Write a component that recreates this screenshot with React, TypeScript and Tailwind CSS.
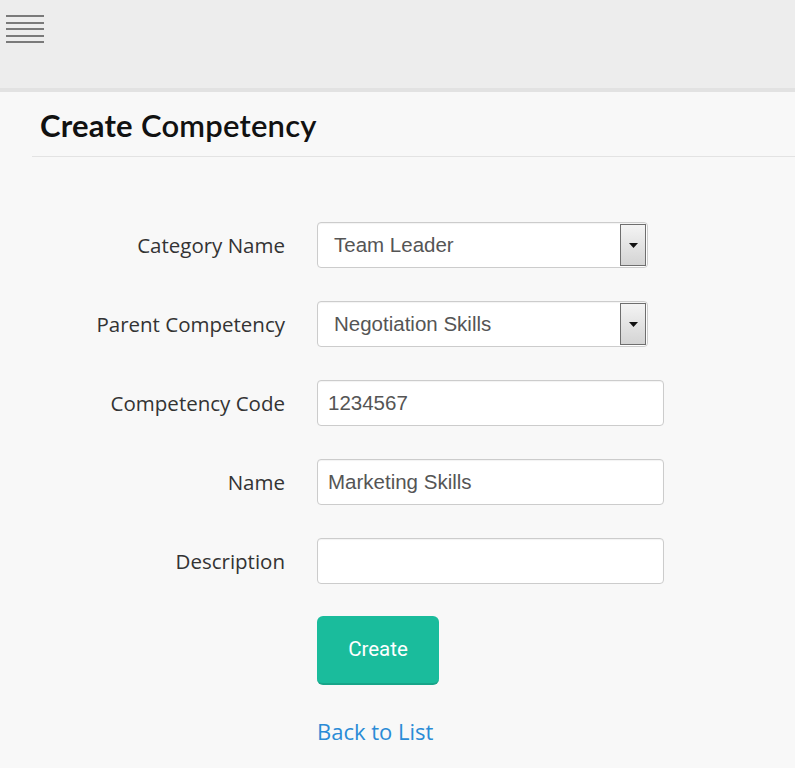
import React from "react";

function SelectField({ value }: { value: string }) {
  return (
    <div className="relative flex h-[46px] w-[331px] items-center rounded-[4px] border border-[#cccccc] bg-white pl-4 shadow-[inset_0_1px_1px_rgba(0,0,0,0.05)]">
      <span className="font-['Liberation_Sans',Arial,sans-serif] text-[20.5px] text-[#555555]">{value}</span>
      <div className="absolute right-[1px] top-[1px] bottom-[1px] flex w-[26px] items-center justify-center border border-[#6e6e6e] bg-gradient-to-b from-[#f4f4f4] to-[#d4d4d4]">
        <svg width="9" height="5" viewBox="0 0 9 5">
          <path d="M0 0 H9 L4.5 5 Z" fill="#111" />
        </svg>
      </div>
    </div>
  );
}

function TextField({ value }: { value: string }) {
  return (
    <div className="flex h-[46px] w-[347px] items-center rounded-[4px] border border-[#cccccc] bg-white pl-[10px] shadow-[inset_0_1px_1px_rgba(0,0,0,0.05)]">
      <span className="font-['Liberation_Sans',Arial,sans-serif] text-[20.5px] text-[#555555]">{value}</span>
    </div>
  );
}

function Row({ label, children }: { label: string; children: React.ReactNode }) {
  return (
    <div className="flex items-center">
      <label className="w-[285px] text-right font-['Open_Sans',sans-serif] text-[20.5px] text-[#333333]">
        {label}
      </label>
      <div className="ml-[32px]">{children}</div>
    </div>
  );
}

export default function App() {
  return (
    <div className="min-h-[768px] w-full bg-[#f8f8f8]">
      <header className="h-[92px] border-b-[4px] border-[#e2e2e2] bg-[#ededed] pl-[6px] pt-[15px]">
        <div className="flex w-[38px] flex-col gap-[4.5px]">
          {[0, 1, 2, 3, 4].map((i) => (
            <div key={i} className="h-[2px] bg-[#7a7a7a]" />
          ))}
        </div>
      </header>

      <div className="pl-[32px]">
        <div className="border-b border-[#e3e3e3] pb-[12px] pl-[8px] pt-[14px]">
          <h1 className="font-['Lato',sans-serif] text-[31px] leading-[38px] tracking-[0.2px] text-[#111111]">
            <span className="font-bold">Create</span> <span className="font-semibold">Competency</span>
          </h1>
        </div>
      </div>

      <div className="flex flex-col gap-[33px] pt-[65px]">
        <Row label="Category Name">
          <SelectField value="Team Leader" />
        </Row>
        <Row label="Parent Competency">
          <SelectField value="Negotiation Skills" />
        </Row>
        <Row label="Competency Code">
          <TextField value="1234567" />
        </Row>
        <Row label="Name">
          <TextField value="Marketing Skills" />
        </Row>
        <Row label="Description">
          <TextField value="" />
        </Row>
      </div>

      <div className="pl-[317px] pt-[32px]">
        <button className="h-[69px] w-[122px] rounded-[6px] border-b-2 border-[#17a589] bg-[#1abc9c] font-['Roboto',sans-serif] text-[20.5px] text-white">
          Create
        </button>
        <div className="pt-[30px]">
          <a className="font-['Open_Sans',sans-serif] text-[22px] text-[#2a8bd6]" href="#">
            Back to List
          </a>
        </div>
      </div>
    </div>
  );
}
